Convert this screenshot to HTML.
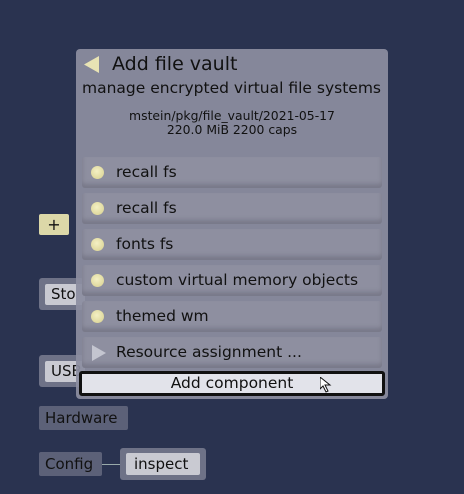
<!DOCTYPE html>
<html><head><style>
*{margin:0;padding:0;box-sizing:border-box}
body{width:464px;height:494px;overflow:hidden;background:#2a3350;font-family:"DejaVu Sans","Liberation Sans",sans-serif;position:relative;color:#111}
.a{position:absolute}
.frame{background:#6e7287;border-radius:3px}
.btn{background:#c9cad2;border-radius:2px;font-size:15px;line-height:20px;padding-left:6px}
.dlg{left:76px;top:49px;width:312px;height:350px;background:rgba(140,142,160,0.93);border-radius:4px}
.it{left:6px;width:300px;height:31px;background:#8e8fa0;border-radius:3px;box-shadow:inset 0 -4px 4px rgba(80,80,95,.35);font-size:15.5px;line-height:31px;padding-left:34px;white-space:nowrap}
.dot{position:absolute;left:9px;top:9px;width:13px;height:13px;border-radius:50%;background:radial-gradient(circle at 45% 40%,#f4f0c4,#d6cf8e)}
</style></head><body>
<div class="a" style="left:39px;top:214px;width:30px;height:21px;background:#dcd8a8;border-radius:2px;font-size:16px;text-align:center;line-height:21px">+</div>
<div class="a frame" style="left:39px;top:278px;width:45px;height:32px"></div>
<div class="a btn" style="left:45px;top:284px;width:40px;height:21px">Sto</div>
<div class="a frame" style="left:39px;top:355px;width:45px;height:32px"></div>
<div class="a btn" style="left:45px;top:361px;width:40px;height:21px">USB</div>
<div class="a frame btn" style="left:39px;top:406px;width:89px;height:24px;background:#5c6178;color:#111;line-height:24px">Hardware</div>
<div class="a frame btn" style="left:39px;top:452px;width:63px;height:24px;background:#5c6178;line-height:24px">Config</div>
<div class="a" style="left:102px;top:464px;width:20px;height:1px;background:#9aa"></div>
<div class="a frame" style="left:120px;top:448px;width:86px;height:32px"></div>
<div class="a btn" style="left:126px;top:453px;width:74px;height:22px;padding-left:8px;line-height:22px">inspect</div>
<div class="a dlg">
 <svg class="a" style="left:8px;top:7px" width="16" height="17"><polygon points="15,0 15,17 0,8.5" fill="#e8e3b4"/></svg>
 <div class="a" style="left:36px;top:2px;font-size:19px;line-height:26px">Add file vault</div>
 <div class="a" style="left:6px;top:28px;font-size:15.5px;line-height:22px;white-space:nowrap">manage encrypted virtual file systems</div>
 <div class="a" style="left:0;top:60px;width:312px;text-align:center;font-size:12.4px;line-height:14px">mstein/pkg/file_vault/2021-05-17<br>220.0 MiB 2200 caps</div>
 <div class="a it" style="top:108px"><span class="dot"></span>recall fs</div>
 <div class="a it" style="top:144px"><span class="dot"></span>recall fs</div>
 <div class="a it" style="top:180px"><span class="dot"></span>fonts fs</div>
 <div class="a it" style="top:216px"><span class="dot"></span>custom virtual memory objects</div>
 <div class="a it" style="top:252px"><span class="dot"></span>themed wm</div>
 <div class="a it" style="top:288px"><svg class="a" style="left:10px;top:8px" width="14" height="16"><polygon points="0,0 14,8 0,16" fill="#c4c5d0"/></svg>Resource assignment ...</div>
 <div class="a" style="left:3px;top:322px;width:306px;height:25px;background:#e2e3ea;border:3px solid #111;border-radius:3px;text-align:center;font-size:15.5px;line-height:19px">Add component</div>
 <svg class="a" style="left:244px;top:328px" width="14" height="16"><polygon points="0,0 0,12 3,9 6,15 8,14 5,8 10,8" fill="#fff" stroke="#111" stroke-width="1"/></svg>
</div>
</body></html>
